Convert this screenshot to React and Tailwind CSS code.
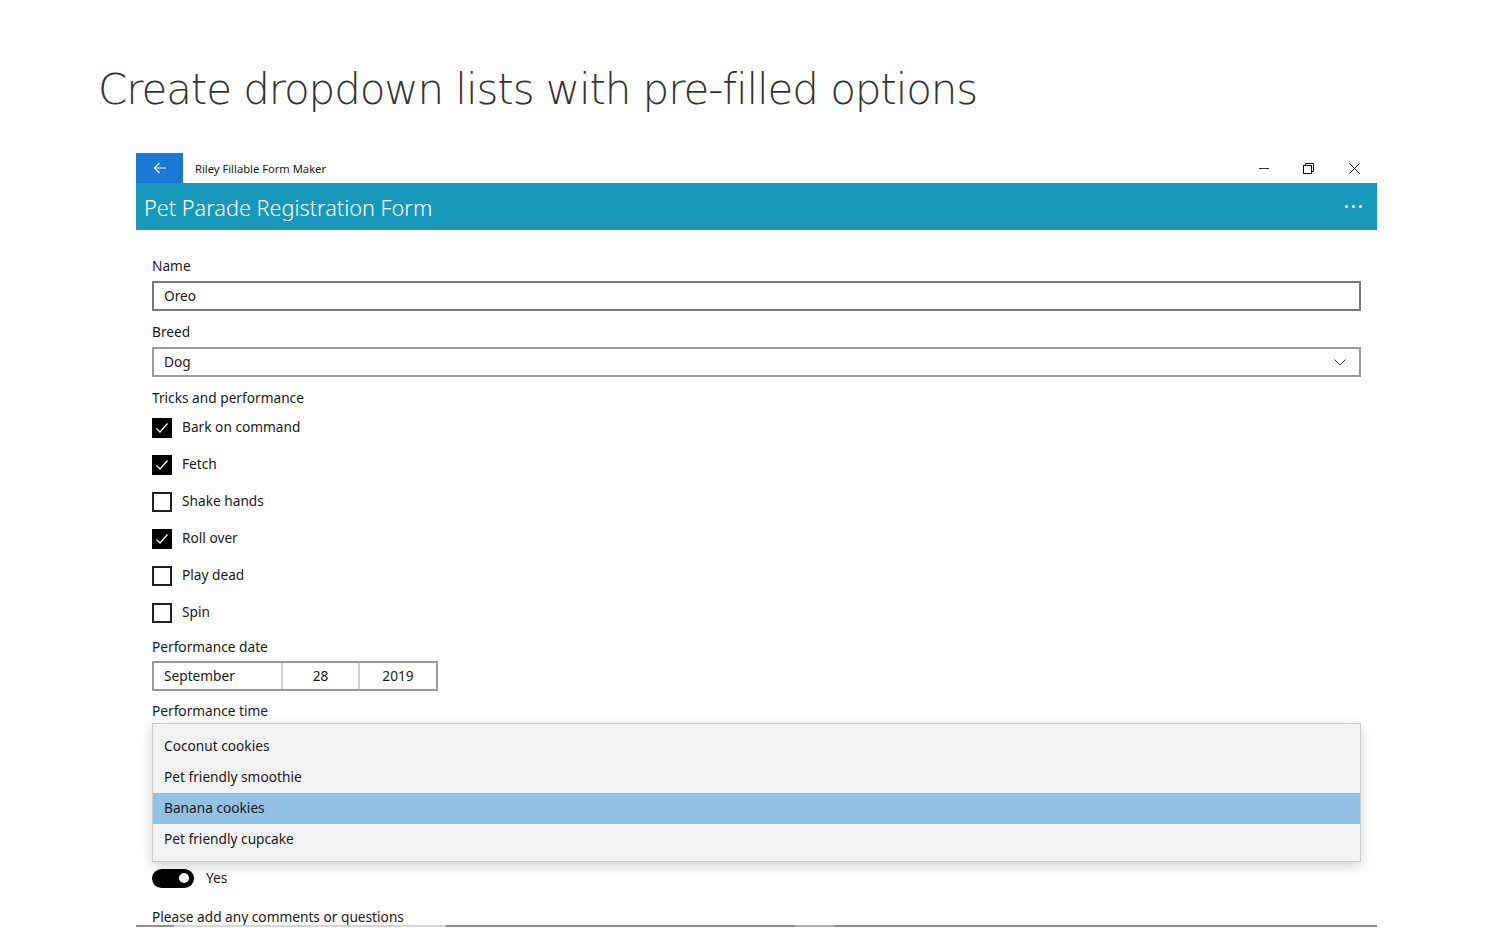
import { useState } from 'react';

const tricks = [
  { label: 'Bark on command', checked: true },
  { label: 'Fetch', checked: true },
  { label: 'Shake hands', checked: false },
  { label: 'Roll over', checked: true },
  { label: 'Play dead', checked: false },
  { label: 'Spin', checked: false },
];

const snacks = ['Coconut cookies', 'Pet friendly smoothie', 'Banana cookies', 'Pet friendly cupcake'];

function CheckRow({ label, checked }) {
  return (
    <div className="flex items-center h-[37px]">
      {checked ? (
        <div className="w-[20px] h-[20px] bg-black flex items-center justify-center">
          <svg width="14" height="14" viewBox="0 0 14 14" fill="none">
            <path d="M1.5 7.5 L5 11 L12.5 2.5" stroke="white" strokeWidth="1.3" />
          </svg>
        </div>
      ) : (
        <div className="w-[20px] h-[20px] border-2 border-[#222] bg-white" />
      )}
      <span className="ml-[10px] text-[13.7px] text-[#1a1a1a]">{label}</span>
    </div>
  );
}

export default function App() {
  const [selected] = useState(2);

  return (
    <div className="min-h-screen bg-white overflow-hidden" style={{ fontFamily: '"Noto Sans", "Open Sans", sans-serif' }}>
      <h1
        className="pl-[98px] pt-[64px] h-[153px] text-[42px] leading-[52px] text-[#333] font-light tracking-[-1.1px]"
        style={{ fontFamily: '"DejaVu Sans", sans-serif' }}
      >
        Create dropdown lists with pre-filled options
      </h1>

      <div className="ml-[136px] w-[1241px]">
        {/* title bar */}
        <div className="flex items-center h-[30px] bg-white">
          <div className="w-[47px] h-full bg-[#1a79d5] flex items-center justify-center">
            <svg width="14" height="12" viewBox="0 0 14 12" fill="none">
              <path d="M13 6 H1.5 M6.5 1 L1.5 6 L6.5 11" stroke="white" strokeWidth="1.1" />
            </svg>
          </div>
          <span className="ml-[12px] text-[11.2px] text-[#1a1a1a] pt-[2px]">Riley Fillable Form Maker</span>
          <div className="ml-auto flex items-center h-full">
            <div className="w-[45px] h-full flex items-center justify-center">
              <div className="w-[10px] h-px bg-[#333]" />
            </div>
            <div className="w-[45px] h-full flex items-center justify-center">
              <svg width="11" height="11" viewBox="0 0 11 11" fill="none">
                <rect x="0.5" y="2.5" width="8" height="8" stroke="#111" />
                <path d="M2.5 2.5 V0.5 H10.5 V8.5 H8.5" stroke="#111" />
              </svg>
            </div>
            <div className="w-[46px] h-full flex items-center justify-center">
              <svg width="11" height="11" viewBox="0 0 11 11" fill="none">
                <path d="M0.5 0.5 L10.5 10.5 M10.5 0.5 L0.5 10.5" stroke="#111" />
              </svg>
            </div>
          </div>
        </div>

        {/* app header */}
        <div className="h-[47px] bg-[#1899bb] flex items-center pl-[8px] pr-[15px]">
          <span className="text-[21.7px] text-white font-light pt-[3px]">Pet Parade Registration Form</span>
          <div className="ml-auto flex gap-[4px]">
            <div className="w-[3px] h-[3px] bg-white rounded-full" />
            <div className="w-[3px] h-[3px] bg-white rounded-full" />
            <div className="w-[3px] h-[3px] bg-white rounded-full" />
          </div>
        </div>

        {/* form */}
        <div className="px-[16px] pt-[26px] text-[#1a1a1a] text-[13.7px]">
          <div className="leading-[20px]">Name</div>
          <div className="mt-[5px] h-[30px] border-2 border-[#7a7a7a] flex items-center px-[10px]">Oreo</div>

          <div className="mt-[11px] leading-[20px]">Breed</div>
          <div className="mt-[5px] h-[30px] border-2 border-[#9a9a9a] flex items-center px-[10px]">
            <span>Dog</span>
            <svg className="ml-auto mr-[3px]" width="12" height="7" viewBox="0 0 12 7" fill="none">
              <path d="M0.5 0.5 L6 6 L11.5 0.5" stroke="#333" strokeWidth="1" />
            </svg>
          </div>

          <div className="mt-[11px] leading-[20px]">Tricks and performance</div>
          <div className="mt-[1px]">
            {tricks.map((t) => (
              <CheckRow key={t.label} label={t.label} checked={t.checked} />
            ))}
          </div>

          <div className="mt-[6px] leading-[20px]">Performance date</div>
          <div className="mt-[4px] flex w-[286px] h-[30px] border-2 border-[#9a9a9a]">
            <div className="w-[129px] flex items-center px-[10px] border-r-2 border-[#cfcfcf]">September</div>
            <div className="w-[77px] flex items-center justify-center border-r-2 border-[#cfcfcf]">28</div>
            <div className="flex-1 flex items-center justify-center">2019</div>
          </div>

          <div className="mt-[10px] leading-[20px]">Performance time</div>

          {/* open combo popup */}
          <div className="mt-[2px] h-[139px] bg-[#f2f2f2] border border-[#cccccc] shadow-[0_4px_12px_rgba(0,0,0,0.18)] pt-[7px] relative z-10">
            {snacks.map((s, i) => (
              <div
                key={s}
                className={`h-[31px] flex items-center px-[11px] ${i === selected ? 'bg-[#92c1e4]' : ''}`}
              >
                {s}
              </div>
            ))}
          </div>

          <div className="mt-[6px] flex items-center h-[20px]">
            <div className="w-[42px] h-[19px] rounded-full bg-black flex items-center justify-end pr-[5px]">
              <div className="w-[10px] h-[10px] rounded-full bg-white" />
            </div>
            <span className="ml-[12px]">Yes</span>
          </div>

          <div className="mt-[19px] leading-[20px]">Please add any comments or questions</div>
        </div>
        <div className="mt-[-2px] h-[2px] flex">
          <div className="w-[38px] h-full bg-[#8f8f8f]" />
          <div className="w-[272px] h-full bg-[#d6d6d6]" />
          <div className="w-[349px] h-full bg-[#8f8f8f]" />
          <div className="w-[40px] h-full bg-[#b0b0b0]" />
          <div className="flex-1 h-full bg-[#8f8f8f]" />
        </div>
      </div>
    </div>
  );
}
